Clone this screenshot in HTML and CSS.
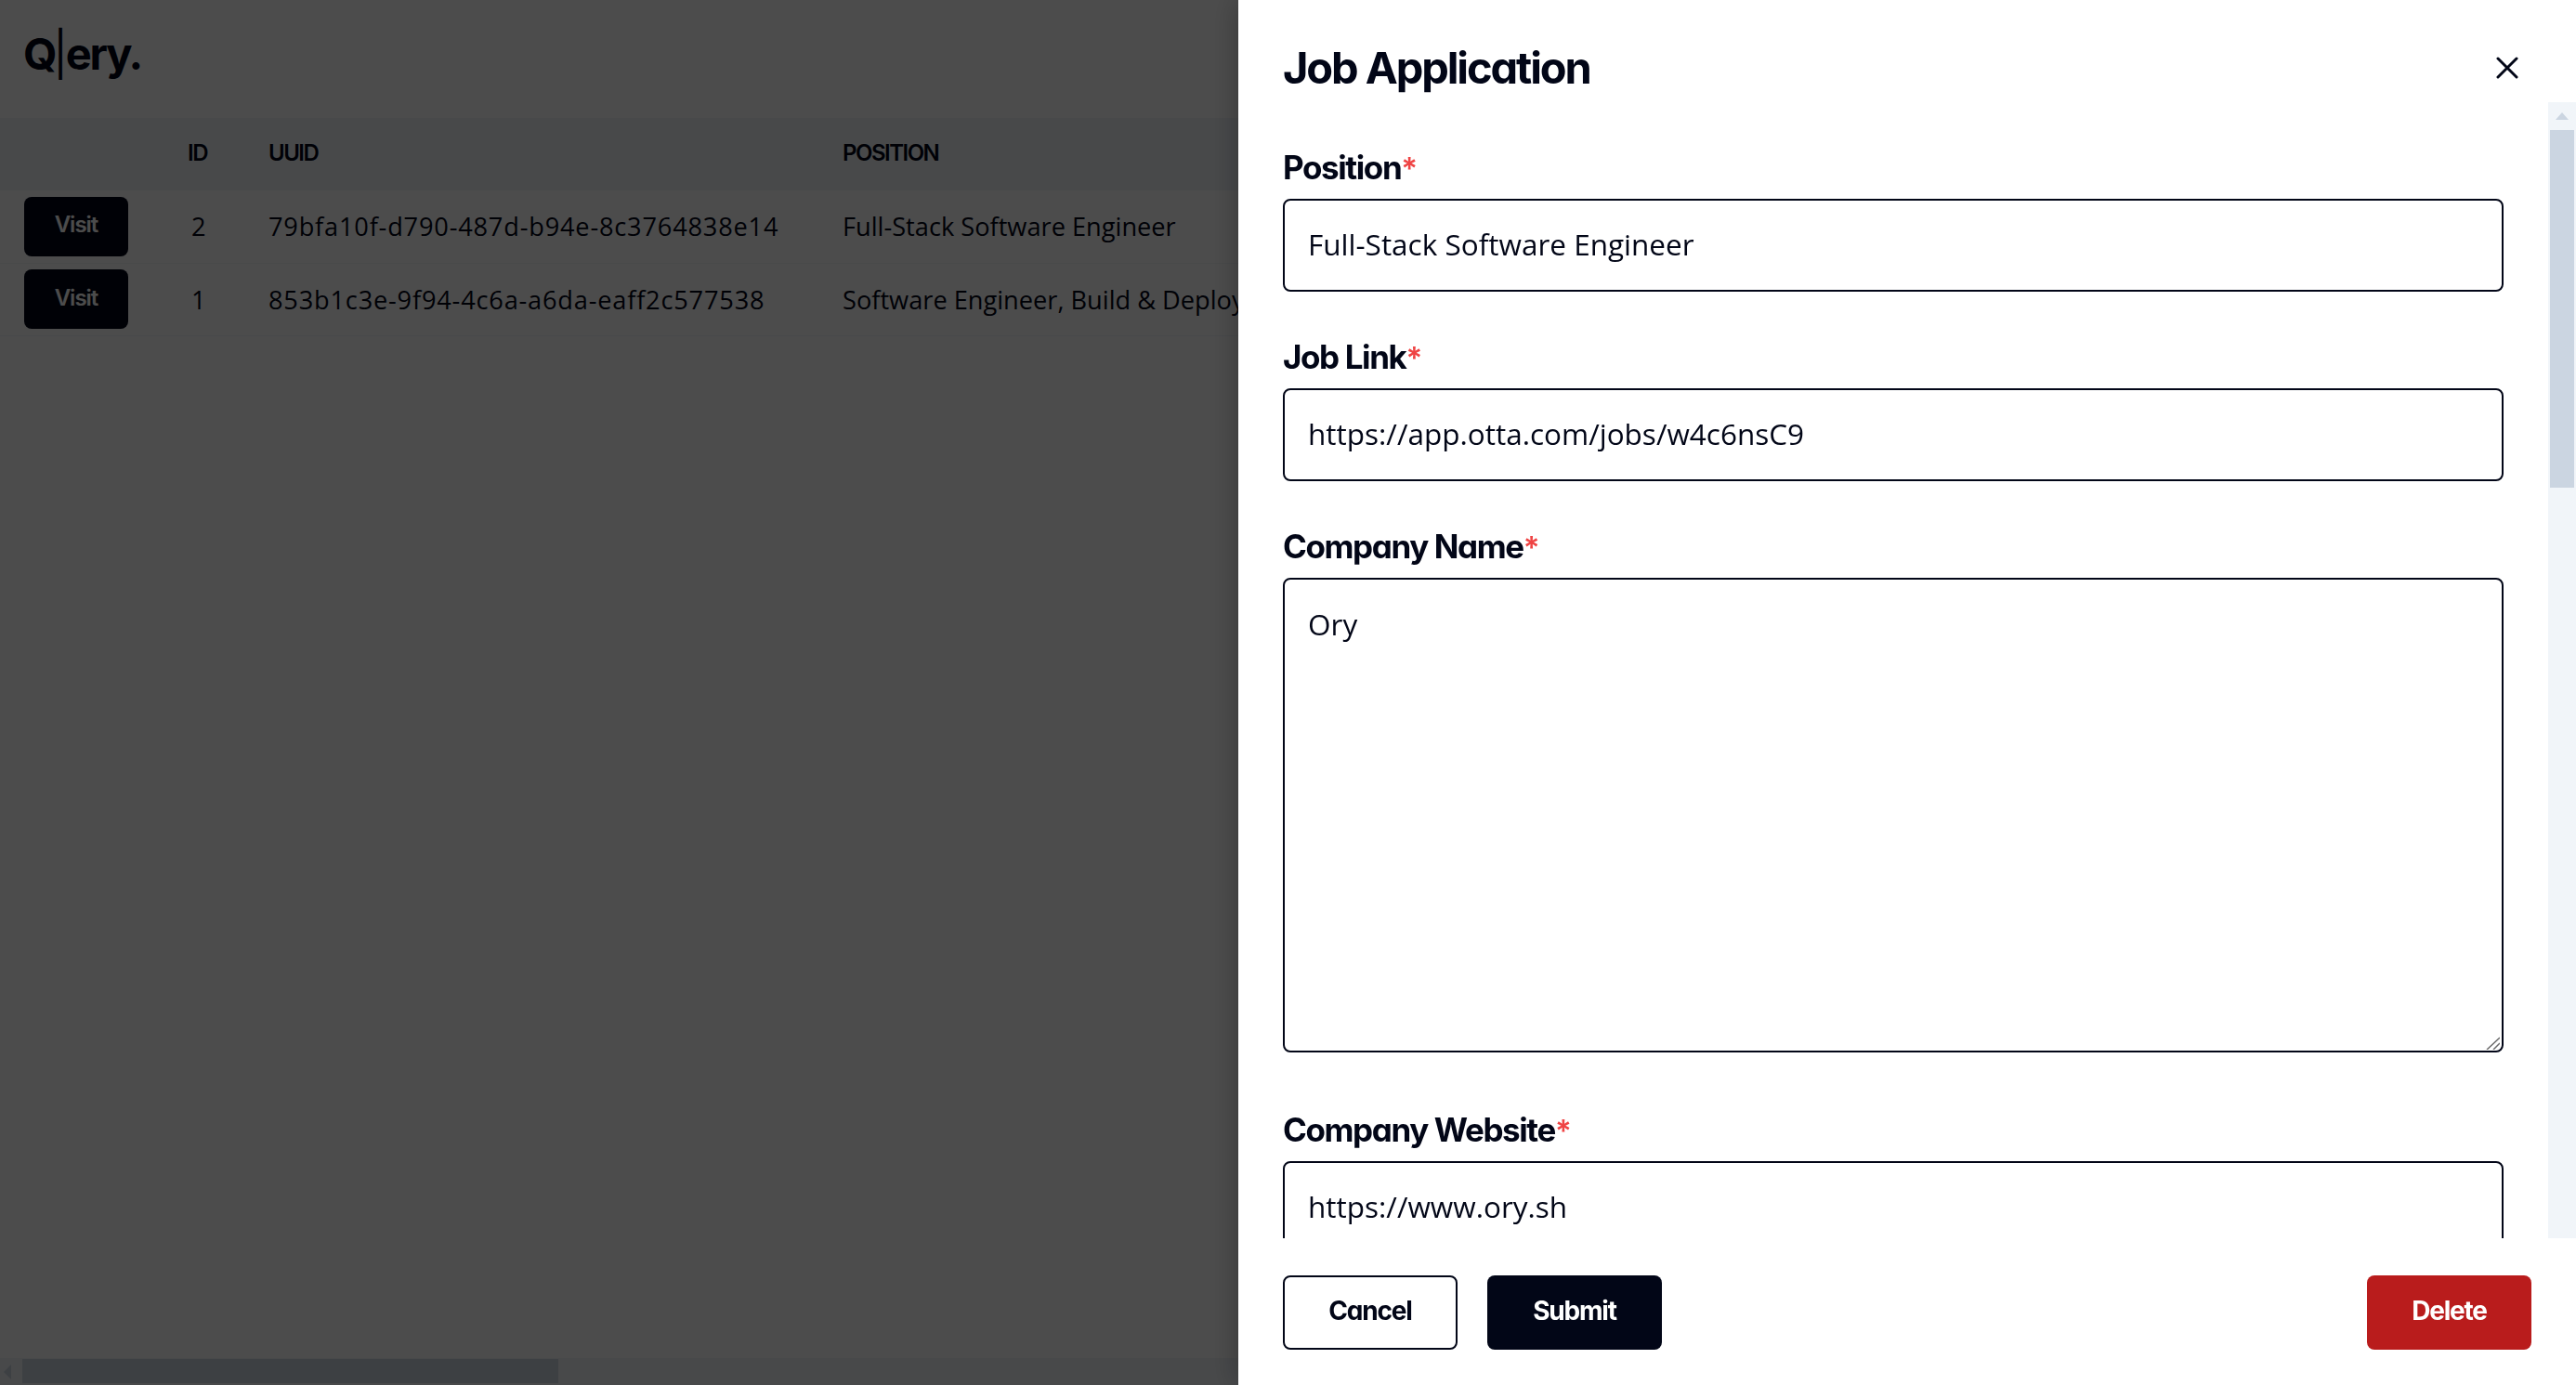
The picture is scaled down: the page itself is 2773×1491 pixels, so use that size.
FILE: index.html
```html
<!DOCTYPE html>
<html lang="en">
<head>
  <meta charset="UTF-8" />
  <meta name="viewport" content="width=device-width, initial-scale=1" />
  <title>Job Application</title>
  <link rel="stylesheet" href="styles.css">
</head>
<body>
  <div class="page">
    <header class="topbar">
      <div class="logo">Q<span class="logo-bar">|</span>ery.</div>
    </header>
    <div class="table-wrap">
      <table class="jobs">
        <thead>
          <tr>
            <th class="col-action"></th>
            <th class="col-id">ID</th>
            <th class="col-uuid">UUID</th>
            <th>POSITION</th>
          </tr>
        </thead>
        <tbody>
          <tr>
            <td class="col-action"><button class="visit-btn">Visit</button></td>
            <td class="col-id">2</td>
            <td class="col-uuid">79bfa10f-d790-487d-b94e-8c3764838e14</td>
            <td>Full-Stack Software Engineer</td>
          </tr>
          <tr>
            <td class="col-action"><button class="visit-btn">Visit</button></td>
            <td class="col-id">1</td>
            <td class="col-uuid">853b1c3e-9f94-4c6a-a6da-eaff2c577538</td>
            <td>Software Engineer, Build &amp; Deploy</td>
          </tr>
        </tbody>
      </table>
    </div>
    <div class="hscroll">
      <div class="hscroll-btn">
        <svg width="8" height="16" viewBox="0 0 8 16"><path d="M0 8 L8 0 V16 Z" fill="#cbd5e1" /></svg>
      </div>
      <div class="hscroll-thumb"></div>
    </div>
  </div>

  <div class="overlay"></div>

  <aside class="panel">
    <div class="panel-head">
      <h1>Job Application</h1>
      <button class="close-btn" aria-label="Close">
        <svg width="24" height="24" viewBox="0 0 24 24" fill="none" stroke="#020617" stroke-width="3" stroke-linecap="round">
          <path d="M2 2 L22 22 M22 2 L2 22" />
        </svg>
      </button>
    </div>

    <div class="panel-main">
      <form class="panel-body">
        <div class="field">
          <label for="position">Position<span class="req">*</span></label>
          <input type="text" id="position" value="Full-Stack Software Engineer" />
        </div>
        <div class="field">
          <label for="link">Job Link<span class="req">*</span></label>
          <input type="text" id="link" value="https://app.otta.com/jobs/w4c6nsC9" />
        </div>
        <div class="field field-area">
          <label for="company">Company Name<span class="req">*</span></label>
          <div class="area-wrap">
            <textarea id="company">Ory</textarea>
            <svg class="resizer" width="15" height="14" viewBox="0 0 15 14" fill="none" stroke="#6b6b6b" stroke-width="1.5">
              <path d="M1 14 L15 1 M8 14 L15 7" />
            </svg>
          </div>
        </div>
        <div class="field">
          <label for="website">Company Website<span class="req">*</span></label>
          <input type="text" id="website" value="https://www.ory.sh" />
        </div>
      </form>
      <div class="vscroll">
        <div class="vscroll-btn">
          <svg width="14" height="8" viewBox="0 0 14 8"><path d="M7 0 L14 8 H0 Z" fill="#cbd5e1" /></svg>
        </div>
        <div class="vscroll-thumb"></div>
      </div>
    </div>

    <div class="panel-foot">
      <button class="btn btn-outline">Cancel</button>
      <button class="btn btn-dark">Submit</button>
      <button class="btn btn-red">Delete</button>
    </div>
  </aside>
</body>
</html>
```

FILE: styles.css
```css
* {
  box-sizing: border-box;
}
html, body {
  height: 100%;
}
body {
  margin: 0;
  font-family: "Open Sans", Arial, sans-serif;
  color: #020617;
  background: #fff;
  overflow: hidden;
}

/* page behind the drawer */
.page {
  height: 100vh;
  display: flex;
  flex-direction: column;
}
.topbar {
  height: 127px;
  padding: 28px 25px 0;
}
.logo {
  font-family: Inter, sans-serif;
  font-size: 47px;
  font-weight: 700;
  line-height: 60px;
  letter-spacing: -2.2px;
}
.logo-bar {
  font-weight: 400;
  margin: 0 0 0 -2px;
}
.table-wrap {
  flex: 1;
  overflow: hidden;
}
.jobs {
  width: 100%;
  table-layout: fixed;
  border-collapse: collapse;
  font-size: 27.2px;
  color: #020617;
}
.jobs th {
  height: 78px;
  background: #f1f5f9;
  text-align: left;
  font-family: Inter, sans-serif;
  font-size: 24px;
  font-weight: 600;
  letter-spacing: -1.5px;
  padding: 0 0 4px;
}
.jobs td {
  height: 78px;
  padding: 0;
  border-bottom: 1px solid #f1f5f9;
  white-space: nowrap;
}
.jobs .col-action {
  width: 185px;
  padding-left: 26px;
}
.col-id {
  width: 104px;
}
.jobs td.col-id {
  padding-left: 21px;
}
.jobs th.col-id {
  padding-left: 17px;
}
.col-uuid {
  width: 618px;
}
.jobs td.col-uuid {
  letter-spacing: 0.8px;
}
.visit-btn {
  display: block;
  width: 112px;
  height: 64px;
  padding: 0 0 4px;
  border: 0;
  border-radius: 8px;
  background: #020617;
  color: #fff;
  font-family: Inter, sans-serif;
  font-size: 24px;
  font-weight: 600;
  letter-spacing: -1px;
}

.hscroll {
  height: 29px;
  flex: none;
  display: flex;
  background: #f1f5f9;
}
.hscroll-btn {
  width: 24px;
  display: flex;
  align-items: center;
  padding-left: 4px;
}
.hscroll-thumb {
  width: 577px;
  margin: 1px 0 2px;
  background: #cbd5e1;
}
.vscroll {
  width: 30px;
  flex: none;
  background: #f1f5f9;
}
.vscroll-btn {
  height: 30px;
  display: flex;
  justify-content: center;
  padding-top: 11px;
}
.vscroll-btn svg {
  display: block;
}
.vscroll-thumb {
  height: 385px;
  margin: 0 2px;
  background: #cbd5e1;
}

.overlay {
  position: fixed;
  inset: 0;
  background: rgba(0, 0, 0, 0.7);
}

/* drawer */
.panel {
  position: fixed;
  top: 0;
  right: 0;
  bottom: 0;
  width: 1440px;
  display: flex;
  flex-direction: column;
  background: #fff;
  box-shadow: 0 0 30px rgba(0, 0, 0, 0.3);
}
.panel-head {
  height: 110px;
  flex: none;
  display: flex;
  align-items: center;
  justify-content: space-between;
  padding: 35px 62px 0 48px;
}
.panel-head h1 {
  margin: 0;
  font-family: Inter, sans-serif;
  font-feature-settings: "cv11";
  font-size: 47px;
  font-weight: 700;
  letter-spacing: -2.1px;
  line-height: 1;
}
.close-btn {
  width: 24px;
  height: 24px;
  padding: 0;
  border: 0;
  background: none;
  line-height: 0;
}
.panel-main {
  flex: 1;
  min-height: 0;
  display: flex;
}
.panel-body {
  flex: 1;
  min-width: 0;
  overflow: hidden;
  padding: 46px 48px 0;
}
.field {
  margin-bottom: 46px;
}
.field-area {
  margin-bottom: 59px;
}
.field label {
  display: block;
  height: 48px;
  font-family: Inter, sans-serif;
  font-feature-settings: "cv11";
  font-size: 35px;
  font-weight: 700;
  letter-spacing: -1.4px;
  line-height: 48px;
  margin-bottom: 10px;
}
.req {
  color: #ef4444;
  font-size: 33px;
  font-weight: 600;
  letter-spacing: 0;
  line-height: 0;
}
.field input,
.field textarea {
  display: block;
  width: 100%;
  padding: 0 25px;
  border: 2.5px solid #020617;
  border-radius: 8px;
  background: #fff;
  color: #020617;
  font-family: "Open Sans", Arial, sans-serif;
  font-size: 31.5px;
  outline: none;
}
.field input {
  height: 100px;
  padding-bottom: 3px;
}
.field textarea {
  height: 511px;
  padding-top: 26px;
  line-height: 44px;
  resize: none;
}
.area-wrap {
  position: relative;
}
.resizer {
  position: absolute;
  right: 4px;
  bottom: 3px;
}
.panel-foot {
  height: 158px;
  flex: none;
  display: flex;
  gap: 32px;
  padding: 40px 48px 38px;
}
.btn {
  height: 80px;
  width: 188px;
  padding: 0 0 4px;
  border-radius: 8px;
  font-family: Inter, sans-serif;
  font-feature-settings: "cv11";
  font-size: 28px;
  font-weight: 700;
  letter-spacing: -1.2px;
}
.btn-outline {
  background: #fff;
  border: 2.5px solid #020617;
  color: #020617;
}
.btn-dark {
  background: #020617;
  border: 0;
  color: #fff;
}
.btn-red {
  width: 177px;
  margin-left: auto;
  background: #b91c1c;
  border: 0;
  color: #fff;
}
```
